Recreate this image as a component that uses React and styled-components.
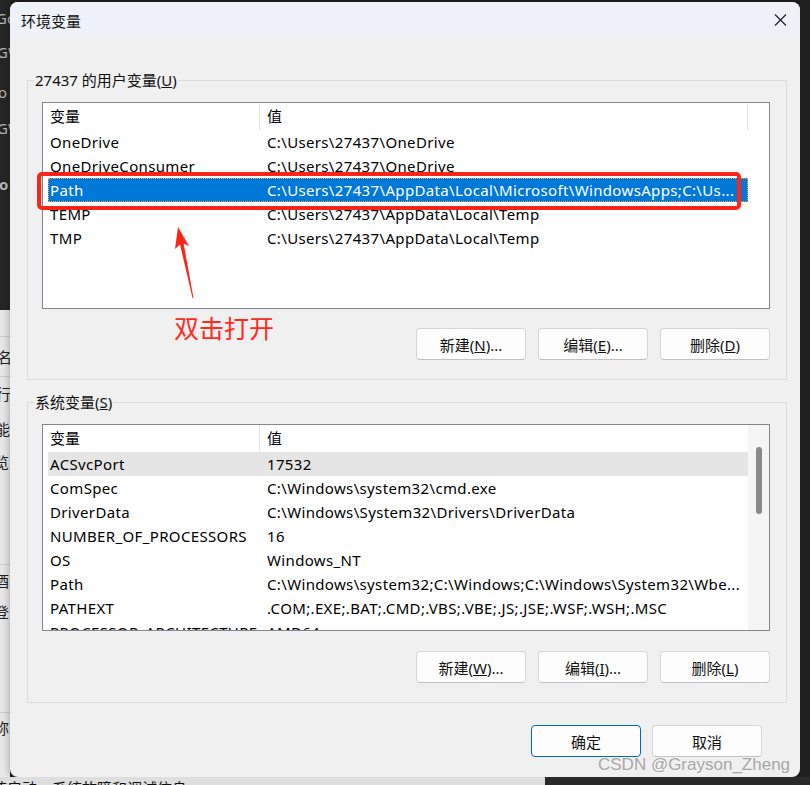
import React from 'react';
import styled, { createGlobalStyle } from 'styled-components';

const GlobalStyle = createGlobalStyle`
  html, body {
    margin: 0;
    padding: 0;
    background: #1f1f1f;
  }
  body {
    font-family: "Microsoft YaHei UI", "Noto Sans", "Noto Sans CJK SC", sans-serif;
  }
`;

const Desktop = styled.div`
  position: relative;
  width: 810px;
  height: 785px;
  overflow: hidden;
  display: grid;
  grid-template-columns: 10px 790px 10px;
  grid-template-rows: 777px 8px;
  background: #1f1f1f;
`;

// what shows of the windows behind the dialog
const LeftStrip = styled.div`
  grid-column: 1;
  grid-row: 1;
  display: flex;
  flex-direction: column;
  overflow: hidden;
`;

const DarkPane = styled.div`
  flex: 0 0 310px;
  background: #262626;
  color: #b8b8b8;
`;

const LightPane = styled.div`
  flex: 1;
  background: #e8e8e8;
  color: #222;
`;

const Frag = styled.div`
  height: ${p => p.$h}px;
  line-height: ${p => p.$h}px;
  font-size: 15px;
  white-space: nowrap;
  margin-left: ${p => p.$x || 0}px;
  border-bottom: ${p => (p.$line ? '1px solid #cfcfcf' : 'none')};
  box-sizing: border-box;
  font-weight: ${p => (p.$bold ? 700 : 400)};
`;

const RightStrip = styled.div`
  grid-column: 3;
  grid-row: 1;
  background: #202020;
`;

const BottomStrip = styled.div`
  grid-column: 1 / -1;
  grid-row: 2;
  display: grid;
  grid-template-columns: 545px 1fr;
  overflow: hidden;
`;

const BottomLight = styled.div`
  background: #dedede;
  font-size: 15px;
  line-height: 20px;
  color: #111;
  white-space: nowrap;
  margin-left: -8px;
  padding-top: 1px;
`;

const BottomDark = styled.div`
  background: #2a2a2a;
`;

const Dialog = styled.div`
  grid-column: 2;
  grid-row: 1;
  margin-top: 2px;
  height: 775px;
  background: #f0f0f0;
  border-radius: 8px;
  overflow: hidden;
  box-shadow: 0 0 8px rgba(0, 0, 0, 0.35);
  display: flex;
  flex-direction: column;
`;

const TitleBar = styled.div`
  height: 36px;
  flex: 0 0 36px;
  background: #eef2f8;
  display: flex;
  align-items: center;
  justify-content: space-between;
  padding: 0 13px 0 11px;
  font-size: 15px;
  color: #111;
`;

const CloseIcon = styled.svg`
  width: 13px;
  height: 12px;
  display: block;
`;

const Body = styled.div`
  flex: 1;
  padding: 0 13px 0 17px;
  display: flex;
  flex-direction: column;
`;

const Group = styled.fieldset`
  margin: ${p => (p.$first ? 32 : 12)}px 0 0;
  padding: 12px 16px 19px 14px;
  border: 1px solid #dcdcdc;
  min-width: 0;
`;

const Legend = styled.legend`
  padding: 0 1px;
  margin-left: -8px;
  font-size: 15px;
  line-height: 20px;
  color: #111;
`;

const ListBox = styled.div`
  height: 207px;
  box-sizing: border-box;
  border: 1px solid #828790;
  background: #fff;
  display: grid;
  grid-template-columns: 1fr 21px;
  overflow: hidden;
`;

const ListBody = styled.div`
  padding-left: 5px;
  min-width: 0;
  display: flex;
  flex-direction: column;
`;

const ScrollCol = styled.div`
  background: ${p => (p.$track ? '#f5f5f5' : '#fff')};
  padding: 22px 7px 0 8px;
`;

const Thumb = styled.div`
  width: 6px;
  height: 67px;
  border-radius: 3px;
  background: #8a8a8a;
`;

const Row = styled.div`
  display: grid;
  grid-template-columns: 212px 488px;
  height: ${p => (p.$head ? 27 : 24)}px;
  flex: 0 0 auto;
  font-size: 15px;
  color: ${p => (p.$selected ? '#fff' : '#000')};
  background: ${p => (p.$selected ? '#0078d7' : p.$hover ? '#e5e5e5' : 'transparent')};
  outline: ${p => (p.$selected ? '1px dotted #f2a35c' : 'none')};
  outline-offset: -1px;
`;

const Cell = styled.div`
  padding-left: ${p => (p.$value ? 7 : 2)}px;
  line-height: ${p => (p.$head ? 27 : 24)}px;
  letter-spacing: ${p => (p.$head ? 0 : 0.35)}px;
  white-space: nowrap;
  overflow: hidden;
  box-sizing: border-box;
  border-right: ${p => (p.$divider ? '1px solid #e5e5e5' : 'none')};
`;

const ButtonRow = styled.div`
  display: flex;
  justify-content: flex-end;
  gap: 12px;
  margin-top: ${p => p.$top}px;
`;

const Button = styled.button`
  width: 110px;
  height: 32px;
  padding: 0;
  box-sizing: border-box;
  border: 1px solid ${p => (p.$primary ? '#0067c0' : '#d6d6d6')};
  border-bottom-color: ${p => (p.$primary ? '#0067c0' : '#c2c2c2')};
  border-radius: 4px;
  background: #fdfdfd;
  font-family: inherit;
  font-size: 15px;
  color: #111;
`;

const Footer = styled.div`
  display: flex;
  justify-content: flex-end;
  gap: 11px;
  margin-top: 22px;
  padding-right: 25px;
`;

// annotations drawn over the screenshot
const Highlight = styled.div`
  position: absolute;
  left: 37px;
  top: 172px;
  width: 704px;
  height: 38px;
  box-sizing: border-box;
  border: 4px solid #ff2418;
  border-radius: 5px;
`;

const Arrow = styled.svg`
  position: absolute;
  left: 165px;
  top: 222px;
  width: 35px;
  height: 80px;
`;

const Note = styled.div`
  position: absolute;
  left: 174px;
  top: 315px;
  font-size: 25px;
  line-height: 25px;
  color: #ff2a22;
  font-family: "Noto Sans CJK SC", sans-serif;
`;

const Watermark = styled.div`
  position: absolute;
  left: 598px;
  top: 756px;
  font-family: "Liberation Sans", Arial, sans-serif;
  font-size: 17px;
  line-height: 17px;
  color: #a6a6a6;
  text-shadow: 0 0 2px rgba(255, 255, 255, 0.7);
  white-space: nowrap;
`;

const userVars = [
  { name: 'OneDrive', value: 'C:\\Users\\27437\\OneDrive' },
  { name: 'OneDriveConsumer', value: 'C:\\Users\\27437\\OneDrive' },
  { name: 'Path', value: 'C:\\Users\\27437\\AppData\\Local\\Microsoft\\WindowsApps;C:\\Us...', selected: true },
  { name: 'TEMP', value: 'C:\\Users\\27437\\AppData\\Local\\Temp' },
  { name: 'TMP', value: 'C:\\Users\\27437\\AppData\\Local\\Temp' },
];

const systemVars = [
  { name: 'ACSvcPort', value: '17532', hover: true },
  { name: 'ComSpec', value: 'C:\\Windows\\system32\\cmd.exe' },
  { name: 'DriverData', value: 'C:\\Windows\\System32\\Drivers\\DriverData' },
  { name: 'NUMBER_OF_PROCESSORS', value: '16' },
  { name: 'OS', value: 'Windows_NT' },
  { name: 'Path', value: 'C:\\Windows\\system32;C:\\Windows;C:\\Windows\\System32\\Wbe...' },
  { name: 'PATHEXT', value: '.COM;.EXE;.BAT;.CMD;.VBS;.VBE;.JS;.JSE;.WSF;.WSH;.MSC' },
  { name: 'PROCESSOR_ARCHITECTURE', value: 'AMD64' },
];

function VarList({ rows, scroll }) {
  return (
    <ListBox>
      <ListBody>
        <Row $head>
          <Cell $head $divider>变量</Cell>
          <Cell $head $value $divider={!scroll}>值</Cell>
        </Row>
        {rows.map((r, i) => (
          <Row key={i} $selected={r.selected} $hover={r.hover}>
            <Cell>{r.name}</Cell>
            <Cell $value>{r.value}</Cell>
          </Row>
        ))}
      </ListBody>
      <ScrollCol $track={scroll}>{scroll && <Thumb />}</ScrollCol>
    </ListBox>
  );
}

function Mnemonic({ label, k, tail = '' }) {
  return (
    <>
      {label}(<u>{k}</u>){tail}
    </>
  );
}

export default function App() {
  return (
    <>
      <GlobalStyle />
      <Desktop>
        <LeftStrip>
          <DarkPane>
            <Frag $h={8} />
            <Frag $h={20} $x={-4}>Go</Frag>
            <Frag $h={14} />
            <Frag $h={20} $x={-3}>GW</Frag>
            <Frag $h={20} />
            <Frag $h={20} $x={-2}>o</Frag>
            <Frag $h={16} />
            <Frag $h={20} $x={-3}>GW</Frag>
            <Frag $h={36} />
            <Frag $h={20} $x={-1} $bold>o</Frag>
          </DarkPane>
          <LightPane>
            <Frag $h={27} $line />
            <Frag $h={40} $x={-3} $line>名</Frag>
            <Frag $h={34} $x={-4}>行</Frag>
            <Frag $h={36} $x={-5}>能</Frag>
            <Frag $h={30} $x={-6}>览</Frag>
            <Frag $h={88} $line />
            <Frag $h={32} $x={-6}>酒</Frag>
            <Frag $h={30} $x={-6}>登</Frag>
            <Frag $h={86} $line />
            <Frag $h={30} $x={-6}>称</Frag>
          </LightPane>
        </LeftStrip>

        <Dialog>
          <TitleBar>
            <span>环境变量</span>
            <CloseIcon viewBox="0 0 13 12">
              <path d="M1 0.5 L12 11.5 M12 0.5 L1 11.5" stroke="#1a1a1a" strokeWidth="1.1" fill="none" />
            </CloseIcon>
          </TitleBar>
          <Body>
            <Group $first>
              <Legend>
                <Mnemonic label="27437 的用户变量" k="U" />
              </Legend>
              <VarList rows={userVars} />
              <ButtonRow $top={19}>
                <Button><Mnemonic label="新建" k="N" tail="..." /></Button>
                <Button><Mnemonic label="编辑" k="E" tail="..." /></Button>
                <Button><Mnemonic label="删除" k="D" /></Button>
              </ButtonRow>
            </Group>

            <Group>
              <Legend>
                <Mnemonic label="系统变量" k="S" />
              </Legend>
              <VarList rows={systemVars} scroll />
              <ButtonRow $top={20}>
                <Button><Mnemonic label="新建" k="W" tail="..." /></Button>
                <Button><Mnemonic label="编辑" k="I" tail="..." /></Button>
                <Button><Mnemonic label="删除" k="L" /></Button>
              </ButtonRow>
            </Group>

            <Footer>
              <Button $primary>确定</Button>
              <Button>取消</Button>
            </Footer>
          </Body>
        </Dialog>

        <RightStrip />

        <BottomStrip>
          <BottomLight>统启动、系统故障和调试信息</BottomLight>
          <BottomDark />
        </BottomStrip>

        <Highlight />
        <Arrow viewBox="0 0 35 80">
          <polygon
            points="13,5 24,24 18.6,21.5 28.5,76 27.5,76 15,22.5 10,27"
            fill="#ff2418"
          />
        </Arrow>
        <Note>双击打开</Note>
        <Watermark>CSDN @Grayson_Zheng</Watermark>
      </Desktop>
    </>
  );
}
